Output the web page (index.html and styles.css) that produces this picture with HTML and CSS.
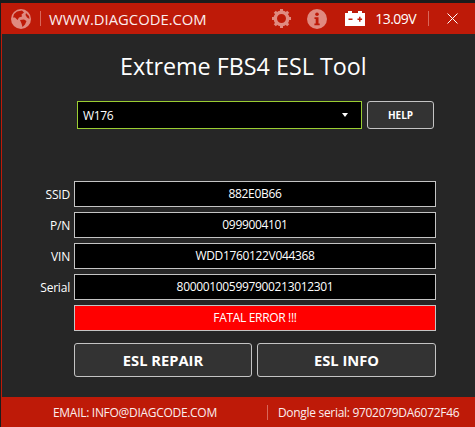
FILE: index.html
```html
<!DOCTYPE html>
<html>

<head>
    <title>Extreme FBS4 ESL Tool</title>
    <meta name="viewport" content="width=device-width, initial-scale=1.0">
    <link rel="stylesheet" href="styles.css">
</head>

<body>
    <div class="window">
        <!-- Title bar -->
        <header class="top-bar">
            <svg class="globe" width="20" height="20" viewBox="0 0 20 20">
                <circle cx="10" cy="10" r="10" fill="#e08a80"></circle>
                <path d="M6 2.500 L11 1.500 L13 3.500 L10.500 5.500 L11 7.500 L8 8.500 L6.500 11 L4 8.500 L2 8.500 L3 5 Z" fill="#be1a08"></path>
                <path d="M9 11 L13 10.500 L15.500 12 L14 15.500 L11.500 18 L10.500 14.500 Z" fill="#be1a08"></path>
                <path d="M15 4 L18 7 L18.500 10 L16 8.500 L14.500 6 Z" fill="#be1a08"></path>
            </svg>
            <span class="divider"></span>
            <span class="site">WWW.DIAGCODE.COM</span>
            <svg class="gear" width="21" height="21" viewBox="0 0 21 21">
                <circle cx="10.500" cy="10.500" r="6.200" fill="none" stroke="#e08a80" stroke-width="3.400"></circle>
                <path d="M10.500 1v19M1 10.500h19M3.800 3.800l13.400 13.400M17.200 3.800L3.800 17.200" stroke="#e08a80" stroke-width="3" stroke-dasharray="3.200 12.600 3.200"></path>
            </svg>
            <svg class="info" width="20" height="20" viewBox="0 0 20 20">
                <circle cx="10" cy="10" r="10" fill="#e08a80"></circle>
                <circle cx="10" cy="5.200" r="1.800" fill="#be1a08"></circle>
                <path d="M7.500 8.200h4v6.400h1.200v1.700H7.400v-1.700h1.300v-4.700H7.500z" fill="#be1a08"></path>
            </svg>
            <svg class="battery" width="20" height="15" viewBox="0 0 20 15">
                <path d="M3 0h4v2h6V0h4v2h3v13H0V2h3z" fill="#fff"></path>
                <path d="M3.500 7.500h4v1.600h-4zM12.500 7.500h1.600V5.800h1.400v1.700h1.600v1.600h-1.600v1.700h-1.400V9.100h-1.600z" fill="#be1a08"></path>
            </svg>
            <span class="voltage">13.09V</span>
            <span class="divider divider-right"></span>
            <svg class="close" width="11" height="11" viewBox="0 0 11 11">
                <path d="M0.500 0.500l10 10M10.500 0.500l-10 10" stroke="#fff" stroke-width="1" fill="none"></path>
            </svg>
        </header>

        <main class="content">
            <h1 class="title">Extreme FBS4 ESL Tool</h1>

            <div class="model-row">
                <div class="model-select">
                    <span>W176</span>
                    <span class="arrow"></span>
                </div>
                <button class="btn help-btn">HELP</button>
            </div>

            <div class="fields">
                <div class="field-row">
                    <label>SSID</label>
                    <div class="field">882E0B66</div>
                </div>
                <div class="field-row">
                    <label>P/N</label>
                    <div class="field">0999004101</div>
                </div>
                <div class="field-row">
                    <label>VIN</label>
                    <div class="field">WDD1760122V044368</div>
                </div>
                <div class="field-row">
                    <label>Serial</label>
                    <div class="field">800001005997900213012301</div>
                </div>
                <div class="field-row">
                    <label></label>
                    <div class="field field-error">FATAL ERROR !!!</div>
                </div>
            </div>

            <div class="actions">
                <button class="btn action-btn">ESL REPAIR</button>
                <button class="btn action-btn">ESL INFO</button>
            </div>
        </main>

        <footer class="bottom-bar">
            <span class="email">EMAIL: INFO@DIAGCODE.COM</span>
            <span class="divider divider-foot"></span>
            <span class="dongle">Dongle serial: 9702079DA6072F46</span>
        </footer>
    </div>
</body>

</html>
```

FILE: styles.css
```css
html,
body {
    margin: 0;
    padding: 0;
    height: 100%;
    background-color: #1c1c1c;
    overflow: hidden;
}

body {
    font-family: "Open Sans", "Noto Sans", sans-serif;
    color: white;
    padding-top: 3px;
    box-sizing: border-box;
}

.window {
    display: flex;
    flex-direction: column;
    height: 424px;
    margin-left: 1px;
    background-color: #262626;
    border-left: 1px solid #be1a08;
}

.top-bar {
    display: flex;
    align-items: center;
    height: 31px;
    flex-shrink: 0;
    padding-left: 9px;
    background-color: #be1a08;
}

.divider {
    width: 1px;
    height: 15px;
    background-color: #d9675a;
}

.globe {
    margin-right: 9px;
}

.site {
    margin-left: 8px;
    font-size: 14.8px;
    color: #fbeeee;
}

.gear {
    margin-left: auto;
}

.info {
    margin-left: 15px;
}

.battery {
    margin-left: 18px;
}

.voltage {
    margin-left: 10px;
    font-size: 14px;
    letter-spacing: -0.55px;
}

.divider-right {
    margin-left: 12px;
}

.close {
    margin-left: 18px;
    margin-right: 17px;
}

.content {
    flex: 1;
    padding-left: 72px;
}

.title {
    margin: 15px 0 0 46px;
    font-size: 23.3px;
    line-height: 34px;
    font-weight: 400;
    white-space: nowrap;
}

.model-row {
    display: flex;
    gap: 5px;
    margin: 18px 0 0 3px;
}

.model-select {
    display: flex;
    align-items: center;
    justify-content: space-between;
    box-sizing: border-box;
    width: 285px;
    height: 28px;
    padding: 0 13px 0 5px;
    background-color: black;
    border: 1px solid #9acd32;
    font-size: 12px;
    letter-spacing: -0.33px;
}

.arrow {
    width: 0;
    height: 0;
    border-left: 3.5px solid transparent;
    border-right: 3.5px solid transparent;
    border-top: 4px solid white;
}

.btn {
    box-sizing: border-box;
    background-color: #333333;
    border: 1px solid #c4c4c4;
    border-radius: 3px;
    color: white;
    font-family: inherit;
    font-weight: 700;
    padding: 0;
}

.help-btn {
    width: 67px;
    height: 28px;
    font-size: 10px;
}

.fields {
    display: flex;
    flex-direction: column;
    gap: 5px;
    margin-top: 52px;
}

.field-row {
    display: flex;
    align-items: center;
}

.field-row label {
    width: 72px;
    margin-left: -72px;
    padding-right: 4px;
    box-sizing: border-box;
    text-align: right;
    font-size: 12px;
    letter-spacing: -0.2px;
}

.field {
    box-sizing: border-box;
    width: 362px;
    height: 26px;
    line-height: 24px;
    background-color: black;
    border: 1px solid #c4c4c4;
    text-align: center;
    font-size: 12px;
    letter-spacing: -0.33px;
}

.field-error {
    background-color: #ff0000;
}

.actions {
    display: grid;
    grid-template-columns: 178px 179px;
    gap: 5px;
    margin-top: 12px;
}

.action-btn {
    height: 34px;
    font-size: 14.7px;
}

.bottom-bar {
    display: flex;
    align-items: center;
    height: 30px;
    flex-shrink: 0;
    background-color: #be1a08;
    font-size: 12px;
    letter-spacing: -0.3px;
    color: #fbeeee;
}

.email {
    margin-left: 51px;
}

.divider-foot {
    margin-left: 50px;
}

.dongle {
    margin-left: 10px;
}
```
